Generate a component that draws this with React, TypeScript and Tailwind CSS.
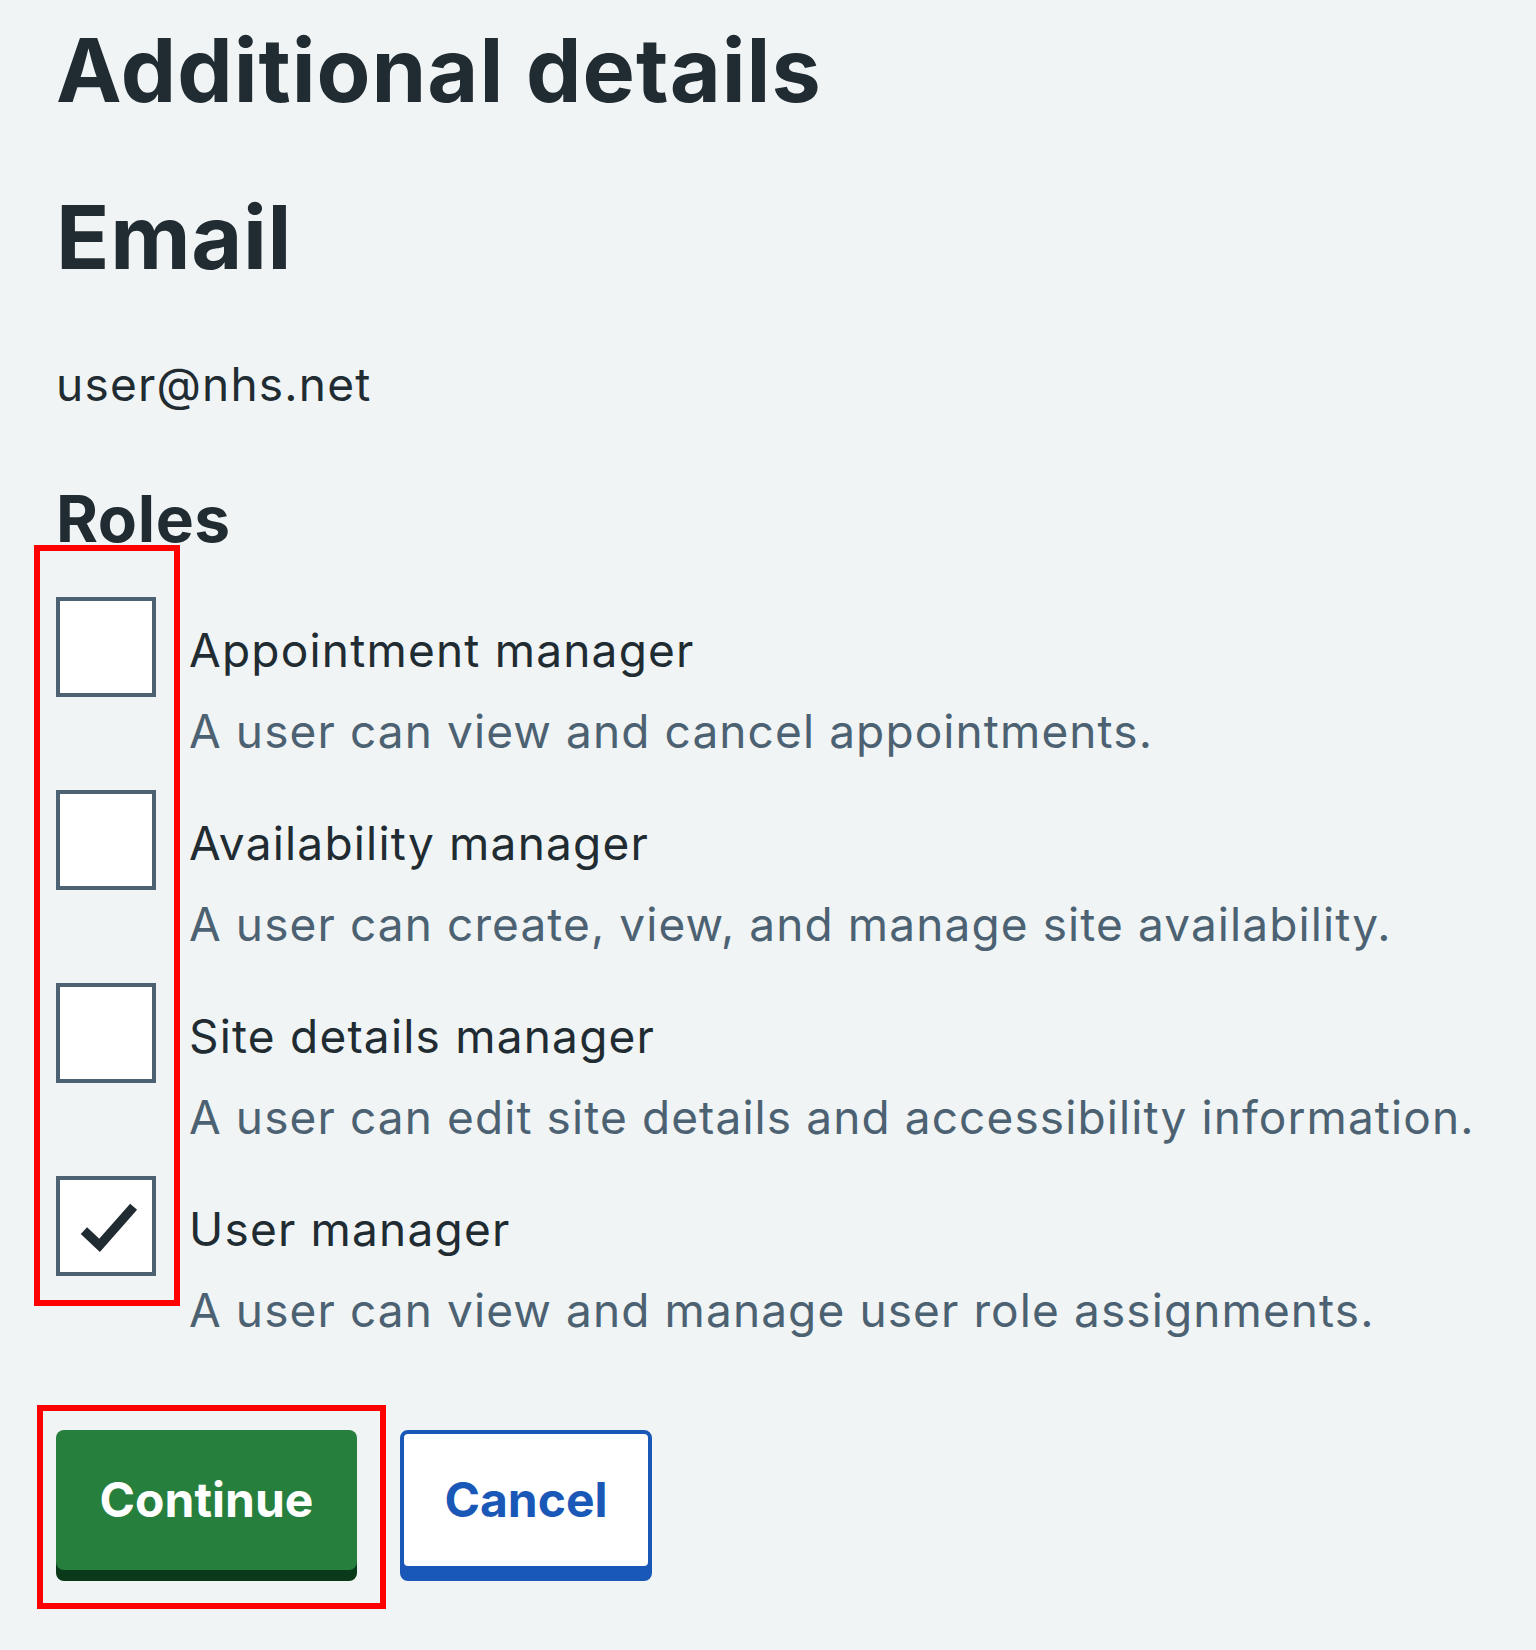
const roles = [
  { label: "Appointment manager", hint: "A user can view and cancel appointments.", checked: false },
  { label: "Availability manager", hint: "A user can create, view, and manage site availability.", checked: false },
  { label: "Site details manager", hint: "A user can edit site details and accessibility information.", checked: false },
  { label: "User manager", hint: "A user can view and manage user role assignments.", checked: true },
]

const App = () => {
  return (
    <div className="min-h-[1650px] bg-[#f0f4f5] px-[56px] pt-[26px] font-['Inter','Noto_Sans',sans-serif] text-[#212b32]">
      <h1 className="text-[88px] leading-[88px] font-bold tracking-[1px]">Additional details</h1>
      <h2 className="mt-[79px] text-[88px] leading-[88px] font-bold tracking-[0.7px]">Email</h2>
      <p className="mt-[69px] text-[46px] leading-[69px] tracking-[1.2px]">user@nhs.net</p>
      <h3 className="mt-[68px] text-[64px] leading-[64px] font-bold tracking-[0.6px]">Roles</h3>

      <div className="relative mt-[46px] flex flex-col gap-[24px]">
        {/* highlight around the checkbox column */}
        <div className="pointer-events-none absolute -left-[22px] -top-[52px] h-[761px] w-[146px] border-[6px] border-[#ff0000]" />
        {roles.map((role) => (
          <label key={role.label} className="flex items-start">
            <span className="flex h-[100px] w-[100px] shrink-0 items-center justify-center border-[4px] border-[#4c6272] bg-white">
              {role.checked && (
                <svg viewBox="0 0 100 100" className="h-[100px] w-[100px]">
                  <polyline points="26,55 43,71 80,29" fill="none" stroke="#212b32" strokeWidth="10" />
                </svg>
              )}
            </span>
            <span className="ml-[33px] flex flex-col pt-[19px]">
              <span className="text-[46px] leading-[69px] tracking-[1.2px]">{role.label}</span>
              <span className="mt-[12px] text-[46px] leading-[69px] tracking-[1.1px] text-[#4c6272]">{role.hint}</span>
            </span>
          </label>
        ))}
      </div>

      <div className="mt-[85px] flex items-start">
        <div className="relative">
          <div className="pointer-events-none absolute -left-[19px] -top-[25px] h-[204px] w-[349px] border-[6px] border-[#ff0000]" />
          <button className="h-[140px] w-[301px] rounded-[8px] bg-[#267f3c] text-[48px] font-bold text-white shadow-[0_11px_0_#0b3a1b]">
            Continue
          </button>
        </div>
        <button className="ml-[43px] h-[140px] w-[252px] rounded-[8px] border-[4px] border-[#1a58b8] bg-white text-[48px] font-bold text-[#1a58b8] shadow-[0_11px_0_#1a58b8]">
          Cancel
        </button>
      </div>
    </div>
  )
}

export default App
